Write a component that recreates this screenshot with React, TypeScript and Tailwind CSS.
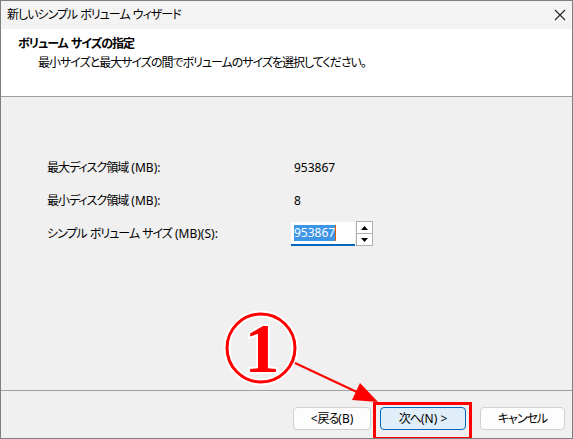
// Japanese runs get tightened so the kana match the narrow system UI font
function T({ children }: { children: string }) {
  const parts = children.split(/([\u3000-\u30ff\u4e00-\u9fff\uff00-\uffef]+)/);
  return (
    <>
      {parts.map((p, i) =>
        i % 2 === 1 ? (
          <span key={i} className="tracking-[-1px]">
            {p}
          </span>
        ) : (
          <span key={i}>{p}</span>
        )
      )}
    </>
  );
}

function Button({ label, primary, w }: { label: string; primary?: boolean; w: string }) {
  return (
    <div
      className={
        'h-[23px] rounded-[4px] border flex items-center justify-center text-[12px] text-black ' +
        w +
        (primary ? ' border-[#0067c0] bg-[#e0eef9]' : ' border-[#d0d0d0] bg-[#fdfdfd]')
      }
    >
      <T>{label}</T>
    </div>
  );
}

function Annotation() {
  return (
    <svg className="absolute inset-0 pointer-events-none" width="573" height="439" viewBox="0 0 573 439">
      <circle cx="260" cy="347" r="34" fill="none" stroke="#ffffff" strokeWidth="7" />
      <circle cx="260" cy="347" r="34" fill="none" stroke="#ff0000" strokeWidth="3" />
      <text
        x="261"
        y="371"
        textAnchor="middle"
        fontFamily='"Liberation Serif", serif'
        fontWeight="bold"
        fontSize="70"
        fill="#ff0000"
        stroke="#ffffff"
        strokeWidth="4"
        paintOrder="stroke"
      >
        1
      </text>
      <line x1="294" y1="362" x2="358" y2="392" stroke="#ff0000" strokeWidth="2" />
      <polygon points="377,401 351,399 359,382" fill="#ff0000" />
      <rect x="373.5" y="402.5" width="96" height="35" fill="none" stroke="#ff0000" strokeWidth="3" />
    </svg>
  );
}

export default function App() {
  return (
    <div className="relative w-[573px] h-[439px] border border-[#7f7f7f] flex flex-col overflow-hidden font-['Noto_Sans','Noto_Sans_CJK_JP',sans-serif] [font-feature-settings:'palt']">
      <div className="h-[28px] bg-[#f3f3f3] flex items-center justify-between pl-[6px] pr-[4px] text-[12px] text-black">
        <span>
          <T>新しいシンプル ボリューム ウィザード</T>
        </span>
        <svg width="12" height="12" viewBox="0 0 12 12" className="mr-[2px]">
          <path d="M1 1 L11 11 M11 1 L1 11" stroke="#222" strokeWidth="1.1" />
        </svg>
      </div>
      <div className="h-[68px] bg-white border-b border-[#a0a0a0] pt-[6px] text-[12px] text-black">
        <div className="pl-[17px] font-bold leading-[17px]">
          <T>ボリューム サイズの指定</T>
        </div>
        <div className="pl-[37px] leading-[17px] mt-[2px]">
          <T>最小サイズと最大サイズの間でボリュームのサイズを選択してください。</T>
        </div>
      </div>
      <div className="flex-1 bg-[#f0f0f0] border-b border-[#a0a0a0] pt-[54px] text-[12px] text-black">
        <div className="grid grid-cols-[244px_auto] pl-[46px]">
          <div className="h-[33px] flex items-center">
            <span><T>最大ディスク領域 (MB):</T></span>
          </div>
          <div className="h-[33px] flex items-center pl-[3px]">953867</div>
          <div className="h-[33px] flex items-center">
            <span><T>最小ディスク領域 (MB):</T></span>
          </div>
          <div className="h-[33px] flex items-center pl-[3px]">8</div>
          <div className="h-[33px] flex items-center">
            <span><T>シンプル ボリューム サイズ (MB)(S):</T></span>
          </div>
          <div className="h-[33px] flex items-center">
            <div className="w-[64px] h-[24px] bg-white border-b-2 border-[#0067c0] flex items-center pl-[3px]">
              <span className="bg-[#3d95e8] text-white leading-[16px]">953867</span>
              <span className="w-[1px] h-[16px] bg-[#e06000]" />
            </div>
            <div className="w-[17px] h-[25px] ml-[1px] border border-[#b0b0b0] bg-white flex flex-col">
              <div className="flex-1 flex items-center justify-center border-b border-[#b0b0b0]">
                <svg width="7" height="4" viewBox="0 0 7 4"><polygon points="3.5,0 7,4 0,4" fill="#000" /></svg>
              </div>
              <div className="flex-1 flex items-center justify-center">
                <svg width="7" height="4" viewBox="0 0 7 4"><polygon points="0,0 7,0 3.5,4" fill="#000" /></svg>
              </div>
            </div>
          </div>
        </div>
      </div>
      <div className="h-[47px] bg-[#f0f0f0] flex items-start justify-end pt-[16px] pr-[7px] text-[12px]">
        <Button label="< 戻る(B)" w="w-[78px]" />
        <div className="ml-[9px]">
          <Button label="次へ(N) >" w="w-[86px]" primary />
        </div>
        <div className="ml-[14px]">
          <Button label="キャンセル" w="w-[85px]" />
        </div>
      </div>
      <Annotation />
    </div>
  );
}
